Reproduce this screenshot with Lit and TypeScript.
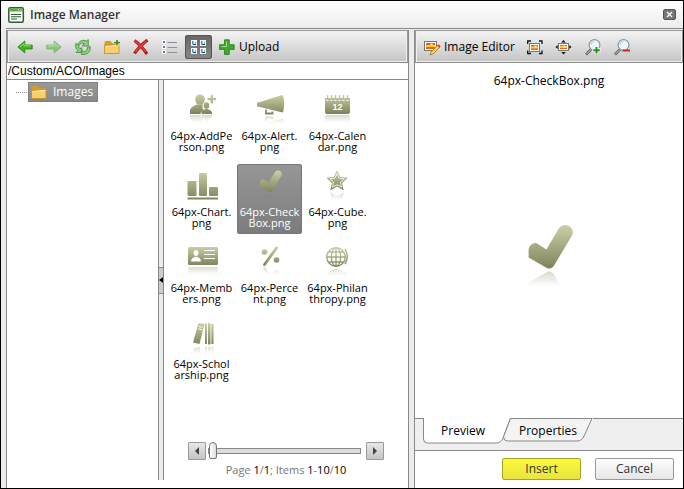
import { LitElement, html, css, svg, nothing } from "lit";
import type { TemplateResult, SVGTemplateResult } from "lit";
import { customElement, property, state } from "lit/decorators.js";
import { classMap } from "lit/directives/class-map.js";

type Glyph = { floor: number; shape: SVGTemplateResult; detail?: SVGTemplateResult; flat?: boolean };

const glyphs: Record<string, Glyph> = {
  person: {
    floor: 20,
    shape: svg`
      <ellipse cx="14" cy="5.5" rx="4.8" ry="5.200"/>
      <path d="M4 20v-3c0-3 3-5 7-6.5h6c-1 3-.5 4.500 1 6-2 .7-3.300 1.500-3.600 3.500z"/>
      <ellipse cx="20.500" cy="11.500" rx="2.800" ry="3.300"/>
      <path d="M15.500 20v-1.300c0-1.700 2-2.700 4-3.700h2c2 1 4.500 2 4.500 3.700V20z"/>
      <path d="M24.600 1h2.400v3h3v2.300h-3v3h-2.400v-3h-3V4h3z"/>`,
  },
  alert: {
    floor: 21,
    shape: svg`
      <path d="M3 8.500l3-.5L28 1q2 0 2 8.500T28.500 18.500L6 13l-3-.5z"/>
      <path d="M12 15.500v4h6.500v-2" fill="none" stroke-width="1.800" class="line"/>`,
  },
  calendar: {
    floor: 20,
    shape: svg`<path d="M3 4h25v14q0 2-2 2H5q-2 0-2-2z"/>
      <path d="M5.500 1v3M9.500 1v3M13.500 1v3M17.500 1v3M21.500 1v3M25.500 1v3" stroke-width="1.400" class="line"/>`,
    detail: svg`<path d="M4.500 6.500h22" stroke="#fff" stroke-width="1.200" stroke-dasharray="2 2"/>
      <text x="15.500" y="16" text-anchor="middle" class="digits">12</text>`,
  },
  chart: {
    floor: 30,
    flat: true,
    shape: svg`<rect x="1.500" y="11" width="9" height="15" rx="1.200"/>
      <rect x="13" y="3" width="8" height="23" rx="1.200"/>
      <rect x="23" y="17" width="9" height="9" rx="1.200"/>
      <rect x="1.500" y="27.500" width="30.500" height="2"/>`,
  },
  check: {
    floor: 22.5,
    shape: svg`<path d="M5.800 13C6 10.600 7.800 9.400 9.700 9.500L14.700 12.800 20.800 2.400C23-1.500 29.300 1 27.600 5.600L18.600 20.600C17.400 22.600 15.600 22.500 14.500 21.800L5.800 16.800z"/>`,
  },
  star: {
    floor: 21,
    shape: svg`<path d="M15 0l3.200 7 7.600.8-5.700 5.100 1.600 7.500-6.700-3.800-6.700 3.800 1.600-7.500L4.200 7.800l7.600-.8z"/>`,
    detail: svg`<path d="M15 3.500l2.200 4.700 5 .6-3.700 3.400 1 5-4.500-2.500-4.500 2.500 1-5-3.700-3.400 5-.6z" fill="none" stroke="#fff" stroke-width=".8"/>`,
  },
  member: {
    floor: 19.5,
    shape: svg`<rect x="2" y="1" width="30" height="18" rx="1.500"/>`,
    detail: svg`<g fill="#fff"><ellipse cx="10" cy="7" rx="2.400" ry="3"/><path d="M5 15.500c0-3 2-4 4-4.800h2c2 .8 4 1.800 4 4.800z"/>
      <path d="M18 4h11v1H18zM18 8h11v1H18zM18 12h11v1H18z"/></g>`,
  },
  percent: {
    floor: 20,
    shape: svg`<path d="M10.500 18.500L22.500 2" stroke-width="2.800" stroke-linecap="round" class="line"/>
      <circle cx="10.500" cy="6" r="2.800"/><circle cx="22.500" cy="14" r="2.800"/>`,
  },
  globe: {
    floor: 21.5,
    shape: svg`<g fill="none" class="line" stroke-width="1.300"><circle cx="14" cy="11" r="9.300"/>
      <ellipse cx="14" cy="11" rx="4.600" ry="9.300"/><path d="M14 2v18M5 11h19M7 6h15M7 16h15"/>
      <path d="M23 3q4.500 7.500 0 15" stroke-width="1.600"/></g>`,
  },
  books: {
    floor: 23,
    shape: svg`<path d="M12.500 1l6 1-5 20-6.500-1.500z"/>
      <path d="M20 1.500V22M23 1v21.500M26.500 2v20" stroke-width="2" class="line"/>
      <path d="M24.800 1.500V22" stroke-width=".8" class="line"/>`,
    detail: svg`<path d="M13 4.500l3.800.8M12.500 7l3.800.8" stroke="#fff" stroke-width="1"/>`,
  },
};

@customElement("olive-glyph")
export class OliveGlyph extends LitElement {
  @property() name = "check";

  static styles = css`
    :host { display: block; width: 32px; height: 32px; }
    .art { display: block; width: 100%; height: 100%; overflow: visible; }
    .tone { fill: url(#tone); }
    .line { stroke: url(#tone); fill: none; }
    .digits { font: bold 9px "Liberation Sans", Arial, sans-serif; fill: #fff; }
  `;

  private reflection(g: Glyph) {
    const f = g.floor;
    return svg`<g mask="url(#mirror)"><g class="tone" transform="translate(0 ${2 * f + 1}) scale(1 -1)">${g.shape}</g></g>`;
  }

  render() {
    const g = glyphs[this.name];
    const f = g.floor;
    return html`<svg class="art" viewBox="0 0 32 32" aria-hidden="true">
      <defs>
        <linearGradient id="tone" gradientUnits="userSpaceOnUse" x1="0" y1="0" x2="0" y2=${f}>
          <stop offset="0" stop-color="#cfd2a8"/><stop offset="1" stop-color="#7f815a"/>
        </linearGradient>
        <linearGradient id="fade" gradientUnits="userSpaceOnUse" x1="0" y1=${f} x2="0" y2=${f + 9}>
          <stop offset="0" stop-color="#fff" stop-opacity=".35"/><stop offset="1" stop-color="#fff" stop-opacity="0"/>
        </linearGradient>
        <mask id="mirror" maskUnits="userSpaceOnUse" x="0" y=${f} width="34" height="10">
          <rect x="0" y=${f} width="34" height="10" fill="url(#fade)"/>
        </mask>
      </defs>
      <g class="tone">${g.shape}</g>
      ${g.detail ?? nothing}
      ${g.flat ? nothing : this.reflection(g)}
    </svg>`;
  }
}

const arrow = svg`<path d="M.8 8l7-6v4h7.400v4H7.800v4z" fill="#3eb51c" stroke="#258010" stroke-width=".8"/><path d="M3 8l4-3.500v2.300h7" fill="none" stroke="#8fe070"/>`;
const photo = (x: number, y: number, w: number, h: number) => svg`
  <rect x=${x} y=${y} width=${w} height=${h} fill="#fff" stroke="#777"/>
  <rect x=${x + 1.5} y=${y + 1.5} width=${w - 3} height=${h - 3} fill="#e8641b"/>
  <path d="M${x + 1.5} ${y + h / 2}h${w - 3}" stroke="#ffc83c" stroke-width="2"/>
  <rect x=${x + w / 2} y=${y + 2} width="2" height="2" fill="#fff0a0"/>`;
const lens = svg`<path d="M6 10.500L1 15.500" stroke="#666" stroke-width="2.600"/><path d="M6 10.500L1.500 15" stroke="#ccc"/>
  <circle cx="9.500" cy="6" r="5.400" fill="#eef6fc" stroke="#8d979f" stroke-width="1.200"/><path d="M6 6a3.500 3.500 0 013.500-3.500" stroke="#b4d4ee" fill="none" stroke-width="1.200"/>`;
const folder = svg`<path d="M.5 3.500q0-1.500 1.500-1.500h4.500L8 4h7v10.500H.5z" fill="#d89a2a"/>
  <path d="M.5 14.500V6.500l14.500-1v9z" fill="#f7cf6e" stroke="#c98a22" stroke-width=".8"/><path d="M1.500 7.500l13-1" stroke="#fff0b8"/>`;
const cell = (x: number, y: number) => svg`<rect x=${x} y=${y} width="6" height="6" fill="#f2f8ff"/>
  <path d="M${x + 1} ${y + 1}h1.500v3.500h-1.500z" fill="#4a8ed0"/><path d="M${x + 2} ${y + 4.500}h3" stroke="#1f4468"/><path d="M${x + 4.500} ${y + 2}v2" stroke="#7fb77c"/>`;

const icons: Record<string, SVGTemplateResult> = {
  back: arrow,
  forward: svg`<g opacity=".5" transform="matrix(-1 0 0 1 16 0)">${arrow}</g>`,
  refresh: svg`<g fill="#8ccf84" stroke="#3c8a35" stroke-width=".8" stroke-linejoin="round">
    <path d="M3 5.500C4 2 8 .3 11.500 2L13.300.6V7H7.200L9.200 4.800C7 3.800 5 4.500 3.800 6.500z"/>
    <path d="M.8 4.500C0 8 1.500 10.500 3 11.500L1.200 13.500H6.800V8.500L5 9.800C3.800 8.800 3.500 7.500 3.800 6z"/>
    <path d="M15 7.500C16 11 14 15.300 9 15.300L6.500 15.500V11.500L8.800 12.600C11.500 12.600 12.500 10.500 12.200 8.500z"/></g>`,
  newfolder: svg`${folder}<path d="M13 0v7M9.500 3.500h6.500" stroke="#fff" stroke-width="2.800"/><path d="M13 .8v5.700M10 3.700h6" stroke="#3f8a1f" stroke-width="1.700"/>`,
  remove: svg`<path d="M1.500 1.500C5 4 10.500 10 14 15M14.500 1C10 4.500 5 9 1.500 14.500" stroke="#c01818" stroke-width="3.200" fill="none"/>
    <path d="M2 2c4 3 7.500 6.500 10.500 10.500M13.500 2C9 5.500 5 9 2.500 13" stroke="#f06060" stroke-width="1" fill="none"/>`,
  list: svg`<g fill="#fff"><rect x="0" y="1" width="4" height="4"/><rect x="0" y="6" width="4" height="4"/><rect x="0" y="11" width="4" height="4"/></g>
    <path d="M1 3h2M1 8h2M1 13h2" stroke="#2b4f7e" stroke-width="1.600"/><path d="M5.500 3.500h9.500M5.500 8.500h9.500M5.500 13.500h9.500" stroke="#909090"/>`,
  tiles: svg`${cell(0, 1)}${cell(9, 1)}${cell(0, 9)}${cell(9, 9)}`,
  plus: svg`<path d="M5.600.8h4.600v5h5v4.600h-5v5H5.600v-5h-5V5.800h5z" fill="#43ab2b" stroke="#28801a" stroke-width=".9"/><path d="M7.500 2.500v5H2.500" fill="none" stroke="#9be083"/>`,
  editor: svg`${photo(0.5, 2.500, 12, 9)}<path d="M14 6L7 13l-1 3 3-1 7-7z" fill="#f6d34c" stroke="#8a6a1c" stroke-width=".7"/><path d="M14 6l2 2" stroke="#d2452c" stroke-width="1.800"/>`,
  fit: svg`${photo(2.500, 4.500, 10, 8)}<path d="M.7 5V2H4M12 2h3v3M15 11.500v3h-3M4 14.500H.7v-3" fill="none" stroke="#111" stroke-width="1.300"/>`,
  actual: svg`${photo(2.500, 4.500, 10, 7)}<path d="M7.500 1l2.300 2.400H5.200zM7.500 15.500l2.300-2.400H5.200zM-.5 8l2.200-2v4zM15.500 8l-2.200-2v4z" fill="#111"/>`,
  zoomin: svg`${lens}<path d="M11.500 7v8M7.500 11h8" stroke="#fff" stroke-width="3.500"/><path d="M11.500 8v6.500M8.300 11.200h6.500" stroke="#2f8f1f" stroke-width="2"/>`,
  zoomout: svg`${lens}<path d="M8.500 11.500h7.500" stroke="#d8202a" stroke-width="2"/>`,
  folder,
  window: svg`<rect x=".8" y=".8" width="14.500" height="14.500" rx="1.500" fill="#fff" stroke="#2e5c35" stroke-width="1.500"/>
    <path d="M1.500 1.500h13v3h-13z" fill="#5ba83d"/><path d="M10 3h1M12.500 3h1" stroke="#e6ffd8"/><path d="M3 7.500h10M3 9.800h10M3 12h6" stroke="#2e5c35" stroke-width="1.100"/>`,
};

const icon = (name: string): TemplateResult =>
  html`<svg class="icon" viewBox="0 0 16 16" aria-hidden="true">${icons[name]}</svg>`;

const files: { glyph: string; lines: [string, string] }[] = [
  { glyph: "person", lines: ["64px-AddPe", "rson.png"] },
  { glyph: "alert", lines: ["64px-Alert.", "png"] },
  { glyph: "calendar", lines: ["64px-Calen", "dar.png"] },
  { glyph: "chart", lines: ["64px-Chart.", "png"] },
  { glyph: "check", lines: ["64px-Check", "Box.png"] },
  { glyph: "star", lines: ["64px-Cube.", "png"] },
  { glyph: "member", lines: ["64px-Memb", "ers.png"] },
  { glyph: "percent", lines: ["64px-Perce", "nt.png"] },
  { glyph: "globe", lines: ["64px-Philan", "thropy.png"] },
  { glyph: "books", lines: ["64px-Schol", "arship.png"] },
];

@customElement("app-root")
export class AppRoot extends LitElement {
  @state() private selected = 4;
  @state() private view = "tiles";

  static styles = css`
    :host {
      display: block;
      font-family: "Open Sans", "Noto Sans", sans-serif;
      font-size: 12px;
      line-height: 16px;
      color: #000;
    }
    * { box-sizing: border-box; }
    button { font: inherit; color: inherit; padding: 0; margin: 0; border: 0; background: none; }
    .icon { width: 16px; height: 16px; display: block; flex: none; overflow: visible; }
    .dialog {
      display: flex; flex-direction: column; min-height: 100vh;
      border: 1px solid #000; background: #fff;
    }
    .head {
      display: flex; align-items: center; gap: 6px; height: 27px; padding: 0 7px;
      background: linear-gradient(#fff, #ececec);
    }
    .title { flex: 1; margin: 0; font-size: 12px; font-weight: 600; color: #333; }
    .close {
      width: 13px; height: 11px; border: 1px solid #555; border-radius: 2px;
      background: #777; display: grid; place-items: center;
    }
    .cross { width: 7px; height: 7px; display: block; }
    .body { flex: 1; display: flex; padding-left: 5px; background: #ececec; }
    .frame {
      flex: 1; display: grid; grid-template-columns: minmax(0, 3fr) 7px minmax(0, 2fr);
      border-top: 1px solid #888; padding-top: 1px;
    }
    .left { display: flex; flex-direction: column; border-left: 1px solid #888; padding-bottom: 8px; background: #fff; }
    .split { background: #ececec; border: solid #888; border-width: 0 1px; }
    .right { display: flex; flex-direction: column; background: #fff; }
    .bar {
      display: flex; align-items: center; height: 33px; gap: 2px; padding: 0 3px;
      border: 1px solid #999; border-bottom-color: #888;
      box-shadow: inset 0 0 0 1px #f0f0f0;
      background: linear-gradient(#f4f4f4, #c4c4c4);
    }
    .tool { display: grid; place-items: center; width: 27px; height: 24px; border-radius: 3px; }
    .tool.on { background: linear-gradient(#666, #888); box-shadow: inset 0 0 0 1px #555; }
    .wide { display: flex; align-items: center; gap: 4px; padding: 0 5px; height: 24px; }
    .path {
      width: 100%; height: 17px; padding: 0 1px; border: 0; border-bottom: 1px solid #888; background: #fff;
      font: 12px "Liberation Sans", Arial, sans-serif; color: #000; outline: 0;
    }
    .browse { flex: 1; display: flex; }
    .tree { width: 151px; padding: 2px 0 0 9px; }
    .branch { display: flex; align-items: center; }
    .dots { width: 11px; border-top: 1px dotted #888; margin-right: 1px; }
    .node {
      display: flex; align-items: center; gap: 6px; height: 20px; padding: 0 4px 0 2px;
      color: #fff; background: linear-gradient(#999, #888); border: 1px solid #808080;
    }
    .grip { width: 6px; display: flex; align-items: center; background: #ececec; border: solid #888; border-width: 0 1px; }
    .fold { width: 4px; height: 27px; background: #ccc; border: solid #888; border-width: 1px 0; display: grid; place-items: center; }
    .folded { width: 4px; height: 6px; display: block; }
    .files { flex: 1; display: flex; flex-direction: column; justify-content: space-between; }
    .grid { display: grid; grid-template-columns: repeat(auto-fill, 65px); gap: 6px 3px; padding: 8px 5px; }
    .tile {
      display: flex; flex-direction: column; align-items: center; gap: 4px; height: 70px; padding: 6px 0;
      border-radius: 3px; font-size: 11px; line-height: 11px; white-space: nowrap; text-align: center;
    }
    .tile.on { color: #fff; background: linear-gradient(#979797, #7c7c7c); box-shadow: inset 0 0 0 1px #777; }
    .pager { display: flex; flex-direction: column; align-items: center; gap: 2px; padding-bottom: 2px; }
    .scrub { display: flex; align-items: center; width: 196px; }
    .step {
      width: 18px; height: 18px; display: grid; place-items: center; border: 1px solid #999; border-radius: 1px;
      background: linear-gradient(#e8e8e8, #c4c4c4);
    }
    .tri { width: 6px; height: 8px; display: block; }
    .range { flex: 1; min-width: 0; height: 18px; margin: 0 5px 0 2px; appearance: none; background: none; }
    .range::-webkit-slider-runnable-track { height: 6px; border: 1px solid #888; background: #ddd; }
    .range::-webkit-slider-thumb {
      appearance: none; width: 8px; height: 17px; margin-top: -7px; border: 1px solid #777;
      border-radius: 4px 4px 2px 2px; background: linear-gradient(90deg, #fff, #ddd);
    }
    .count { font-size: 11px; color: #777; }
    .count b { font-weight: 400; color: #000; }
    .stage { flex: 1; display: flex; flex-direction: column; align-items: center; padding-top: 10px; }
    .view { flex: 1; display: flex; align-items: center; padding-top: 4px; }
    .big { width: 64px; height: 64px; }
    .tabs { display: flex; height: 33px; padding-left: 8px; background: #efefef; border-bottom: 1px solid #888; }
    .rule { flex: 1; border-top: 1px solid #888; }
    .lead { width: 8px; margin-left: -8px; border-top: 1px solid #888; }
    .tab { position: relative; width: 80px; height: 26px; }
    .tab.second { width: 90px; }
    .shape { position: absolute; left: 0; top: 0; overflow: visible; }
    .tabtext { position: relative; }
    .actions { display: flex; justify-content: flex-end; gap: 14px; padding: 7px 9px 8px; }
    .action {
      width: 79px; height: 22px; border: 1px solid #999; border-radius: 2px; color: #333;
      background: linear-gradient(#fdfdfd, #e6e6e6);
    }
    .action.main { border-color: #a5a32c; background: linear-gradient(#fbf83c, #e8e53c); }
  `;

  private tool(name: string, label: string) {
    const toggles = name === "tiles" || name === "list";
    return html`<button
      class=${classMap({ tool: true, on: this.view === name })}
      aria-label=${label}
      @click=${() => toggles && (this.view = name)}
    >${icon(name)}</button>`;
  }

  render() {
    const current = files[this.selected].lines.join("");
    return html`<div class="dialog">
      <header class="head">
        ${icon("window")}
        <h1 class="title">Image Manager</h1>
        <button class="close" aria-label="Close">
          <svg class="cross" viewBox="0 0 7 7"><path d="M1 1l5 5M6 1L1 6" stroke="#fff" stroke-width="1.200"/></svg>
        </button>
      </header>
      <div class="body"><div class="frame">
        <section class="left">
          <div class="bar">
            ${this.tool("back", "Back")}${this.tool("forward", "Forward")}${this.tool("refresh", "Refresh")}
            ${this.tool("newfolder", "New folder")}${this.tool("remove", "Delete")}${this.tool("list", "List view")}
            ${this.tool("tiles", "Thumbnails view")}
            <button class="wide">${icon("plus")}Upload</button>
          </div>
          <input class="path" aria-label="Path" .value=${"/Custom/ACO/Images"} />
          <div class="browse">
            <nav class="tree">
              <div class="branch"><span class="dots"></span><button class="node">${icon("folder")}Images</button></div>
            </nav>
            <div class="grip">
              <button class="fold" aria-label="Collapse tree">
                <svg class="folded" viewBox="0 0 4 6"><path d="M4 0v6L0 3z"/></svg>
              </button>
            </div>
            <div class="files">
              <div class="grid">
                ${files.map((f, i) => html`<button
                  class=${classMap({ tile: true, on: i === this.selected })}
                  @click=${() => (this.selected = i)}
                ><olive-glyph name=${f.glyph}></olive-glyph><span>${f.lines[0]}<br />${f.lines[1]}</span></button>`)}
              </div>
              <div class="pager">
                <div class="scrub">
                  <button class="step" aria-label="Previous page">
                    <svg class="tri" viewBox="0 0 6 8"><path d="M5 0v8L1 4z" fill="#444"/></svg>
                  </button>
                  <input class="range" type="range" min="0" max="1" value="0" aria-label="Page" />
                  <button class="step" aria-label="Next page">
                    <svg class="tri" viewBox="0 0 6 8"><path d="M1 0v8l4-4z" fill="#444"/></svg>
                  </button>
                </div>
                <div class="count">Page <b>1</b>/<b>1</b>; Items <b>1</b>-<b>10</b>/<b>10</b></div>
              </div>
            </div>
          </div>
        </section>
        <div class="split"></div>
        <section class="right">
          <div class="bar">
            <button class="wide">${icon("editor")}Image Editor</button>
            ${this.tool("fit", "Best fit")}${this.tool("actual", "Actual size")}
            ${this.tool("zoomin", "Zoom in")}${this.tool("zoomout", "Zoom out")}
          </div>
          <div class="stage">
            <span>${current}</span>
            <div class="view"><olive-glyph class="big" name=${files[this.selected].glyph}></olive-glyph></div>
          </div>
          <div class="tabs" role="tablist">
            <span class="lead"></span>
            <button class="tab" role="tab" aria-selected="true">
              <svg class="shape" width="88" height="26"><path d="M.5 0v21q0 4 4 4H73q5 0 7-5L87.500 0z" fill="#fff"/><path d="M.5 0v21q0 4 4 4H73q5 0 7-5L87.500 0" fill="none" stroke="#888"/></svg>
              <span class="tabtext">Preview</span>
            </button>
            <button class="tab second" role="tab" aria-selected="false">
              <svg class="shape" width="90" height="26"><path d="M7.500.5L.5 19q0 4 4 4H74q5 0 7-5L89 .5z" fill="#f4f4f4" stroke="#888"/></svg>
              <span class="tabtext">Properties</span>
            </button>
            <span class="rule"></span>
          </div>
          <div class="actions">
            <button class="action main">Insert</button>
            <button class="action">Cancel</button>
          </div>
        </section>
      </div></div>
    </div>`;
  }
}
